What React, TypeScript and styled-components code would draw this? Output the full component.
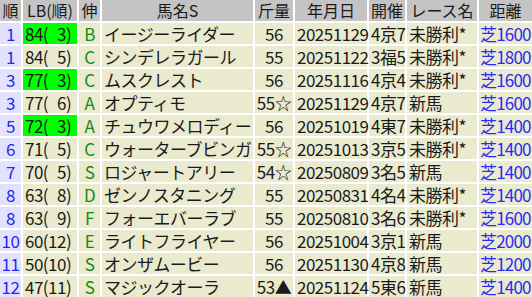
import React from "react";
import styled, { createGlobalStyle } from "styled-components";

interface Entry {
  no: string;
  lb: string;
  hit: boolean;
  grade: string;
  name: string;
  weight: string;
  date: string;
  venue: string;
  race: string;
  dist: string;
}

// figure space keeps one-digit ranks as wide as two-digit ones
const F = "\u2007";

const rows: Entry[] = [
  { no: "1", lb: `84(${F}3)`, hit: true, grade: "B", name: "イージーライダー", weight: "56", date: "20251129", venue: "4京7", race: "未勝利*", dist: "芝1600" },
  { no: "1", lb: `84(${F}5)`, hit: false, grade: "C", name: "シンデレラガール", weight: "55", date: "20251122", venue: "3福5", race: "未勝利*", dist: "芝1800" },
  { no: "3", lb: `77(${F}3)`, hit: true, grade: "C", name: "ムスクレスト", weight: "56", date: "20251116", venue: "4京4", race: "未勝利*", dist: "芝1600" },
  { no: "3", lb: `77(${F}6)`, hit: false, grade: "A", name: "オプティモ", weight: "55☆", date: "20251129", venue: "4京7", race: "新馬", dist: "芝1600" },
  { no: "5", lb: `72(${F}3)`, hit: true, grade: "A", name: "チュウワメロディー", weight: "56", date: "20251019", venue: "4東7", race: "未勝利*", dist: "芝1400" },
  { no: "6", lb: `71(${F}5)`, hit: false, grade: "C", name: "ウォーターブビンガ", weight: "55☆", date: "20251013", venue: "3京5", race: "未勝利*", dist: "芝1400" },
  { no: "7", lb: `70(${F}5)`, hit: false, grade: "S", name: "ロジャートアリー", weight: "54☆", date: "20250809", venue: "3名5", race: "新馬", dist: "芝1400" },
  { no: "8", lb: `63(${F}8)`, hit: false, grade: "D", name: "ゼンノスタニング", weight: "55", date: "20250831", venue: "4名4", race: "未勝利*", dist: "芝1400" },
  { no: "8", lb: `63(${F}9)`, hit: false, grade: "F", name: "フォーエバーラブ", weight: "55", date: "20250810", venue: "3名6", race: "未勝利*", dist: "芝1600" },
  { no: "10", lb: "60(12)", hit: false, grade: "E", name: "ライトフライヤー", weight: "56", date: "20251004", venue: "3京1", race: "新馬", dist: "芝2000" },
  { no: "11", lb: "50(10)", hit: false, grade: "S", name: "オンザムービー", weight: "56", date: "20251130", venue: "4京8", race: "新馬", dist: "芝1200" },
  { no: "12", lb: "47(11)", hit: false, grade: "S", name: "マジックオーラ", weight: "53▲", date: "20251124", venue: "5東6", race: "新馬", dist: "芝1400" },
];

const GlobalStyle = createGlobalStyle`
  body {
    margin: 0;
    background: #ffffff;
    font-family: "Noto Sans CJK JP", "Noto Sans", sans-serif;
  }
`;

const Table = styled.div`
  width: 532px;
  display: grid;
  grid-template-columns: 21px 54px 21px 151px 38px 72px 36px 70px 53px;
  grid-auto-rows: 21px;
  gap: 2px;
  background: #ffffff;
  font-size: 17px;
  letter-spacing: -0.5px;
  line-height: 21px;
`;

const HeaderCell = styled.div`
  background: #c4c4c4;
  color: #1a1a1a;
  font-size: 16px;
  letter-spacing: 0;
  text-align: center;
  line-height: 21px;
  white-space: nowrap;
`;

const Cell = styled.div<{ $align?: "left" | "center" }>`
  background: #eaeacf;
  color: #1a1a1a;
  text-align: ${(p) => p.$align ?? "left"};
  padding-left: ${(p) => (p.$align === "center" ? "0" : "2px")};
  white-space: nowrap;
`;

const NumCell = styled.div`
  background: #e2e2ff;
  color: #2626f0;
  text-align: center;
  white-space: nowrap;
`;

const LbCell = styled(Cell)<{ $hit: boolean }>`
  background: ${(p) => (p.$hit ? "#00ff00" : "#eaeacf")};
`;

const GradeCell = styled(Cell)`
  color: #138a13;
`;

const DistCell = styled(Cell)`
  color: #2a2af5;
  padding-left: 1px;
  letter-spacing: -0.8px;
`;

const headers = ["順", "LB(順)", "伸", "馬名S", "斤量", "年月日", "開催", "レース名", "距離"];

export default function App(): React.ReactElement {
  return (
    <>
      <GlobalStyle />
      <Table>
        {headers.map((h) => (
          <HeaderCell key={h}>{h}</HeaderCell>
        ))}
        {rows.map((r, i) => (
          <React.Fragment key={i}>
            <NumCell>{r.no}</NumCell>
            <LbCell $hit={r.hit}>{r.lb}</LbCell>
            <GradeCell $align="center">{r.grade}</GradeCell>
            <Cell>{r.name}</Cell>
            <Cell $align="center">{r.weight}</Cell>
            <Cell>{r.date}</Cell>
            <Cell>{r.venue}</Cell>
            <Cell>{r.race}</Cell>
            <DistCell>{r.dist}</DistCell>
          </React.Fragment>
        ))}
      </Table>
    </>
  );
}
